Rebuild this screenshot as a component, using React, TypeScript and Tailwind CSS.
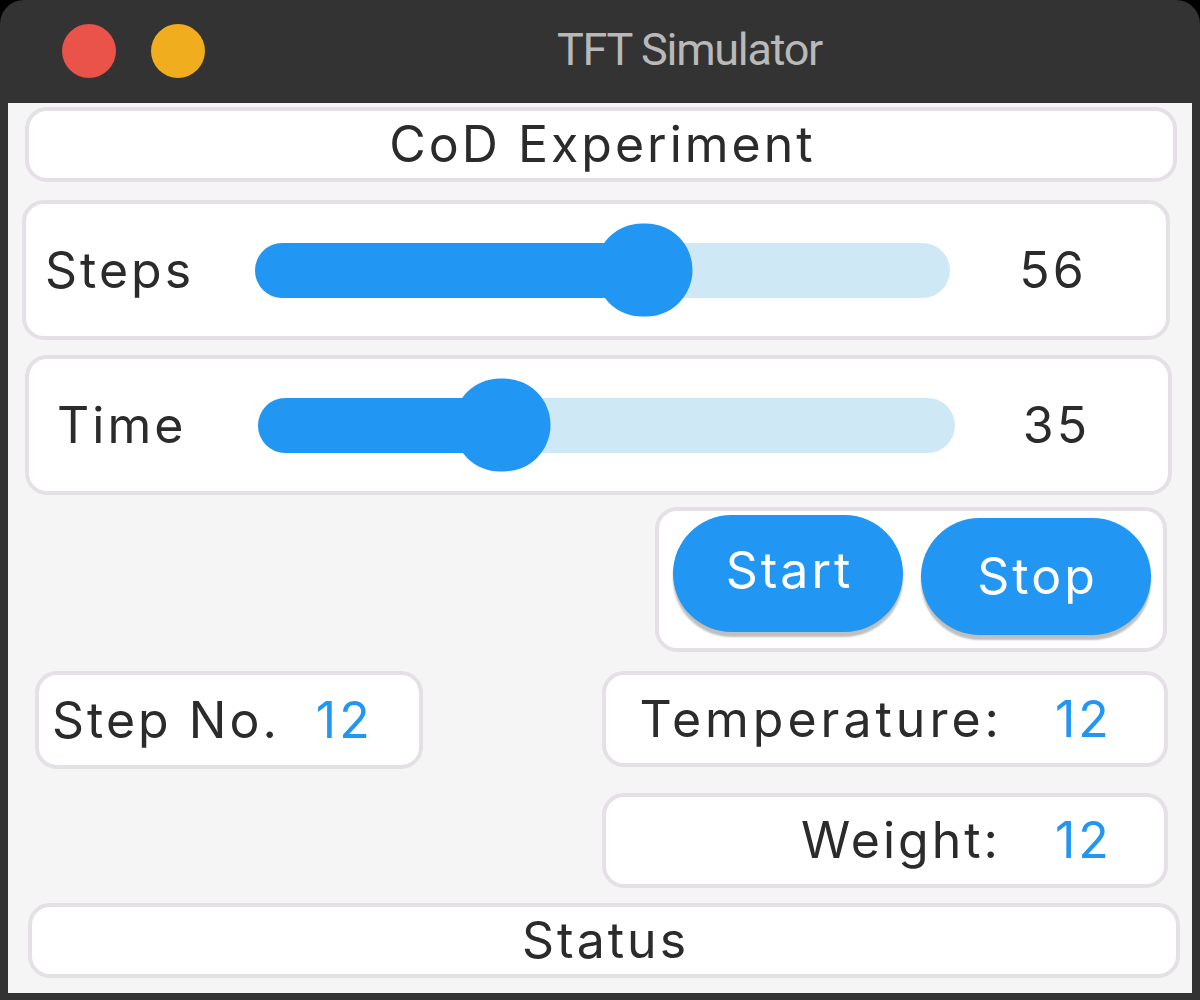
import React from "react";

const PANEL = "rounded-[22px] border-4 border-[#e4e0e6] bg-white";

function Slider({ value, width }: { value: number; width: number }) {
  return (
    <div className="relative h-[55px] rounded-full bg-[#cfe8f5]" style={{ width }}>
      <div
        className="absolute left-0 top-0 h-full rounded-full bg-[#2196f3]"
        style={{ width: `${value}%` }}
      />
      <div
        className="absolute top-1/2 h-[93px] w-[97px] -translate-x-1/2 -translate-y-1/2 rounded-full bg-[#2196f3]"
        style={{ left: `${value}%` }}
      />
    </div>
  );
}

export default function App() {
  return (
    <div className="h-[1000px] w-[1200px] overflow-hidden bg-black font-['Inter',sans-serif] text-[#2b2b2b]">
      <div className="flex h-full flex-col rounded-t-[24px] bg-[#333333] px-[8px] pb-[7px]">
        {/* title bar */}
        <div className="relative flex h-[103px] shrink-0 items-start pt-[24px]">
          <div className="ml-[54px] h-[54px] w-[54px] rounded-full bg-[#e9534a]" />
          <div className="ml-[35px] h-[54px] w-[54px] rounded-full bg-[#f0ad1e]" />
          <div className="absolute left-[549px] top-[22px] font-['Roboto',sans-serif] text-[45px] leading-[56px] tracking-[-1.3px] text-[#b9b9b9]">
            TFT Simulator
          </div>
        </div>

        <div className="flex flex-1 flex-col bg-[#f5f5f5] text-[50px] tracking-[3px]">
          {/* header */}
          <div className={`${PANEL} ml-[17px] mt-[4px] flex h-[75px] w-[1152px] items-center justify-center pl-[3px]`}>
            CoD Experiment
          </div>

          {/* steps */}
          <div className={`${PANEL} ml-[14px] mt-[18px] flex h-[140px] w-[1148px] items-center`}>
            <div className="w-[229px] pl-[19px]">Steps</div>
            <Slider value={56} width={695} />
            <div className="flex-1 pr-[10px] text-center">56</div>
          </div>

          {/* time */}
          <div className={`${PANEL} ml-[17px] mt-[15px] flex h-[140px] w-[1147px] items-center`}>
            <div className="w-[229px] pl-[28px]">Time</div>
            <Slider value={35} width={697} />
            <div className="flex-1 pr-[10px] text-center">35</div>
          </div>

          {/* buttons */}
          <div className={`${PANEL} ml-[647px] mt-[12px] flex h-[145px] w-[512px] items-start gap-[18px] pl-[14px] pt-[4px]`}>
            <button className="flex h-[117px] w-[230px] items-center justify-center rounded-full bg-[#2196f3] pb-[6px] pl-[3px] tracking-[3px] text-white shadow-[0_5px_2px_rgba(0,0,0,0.25)]">
              Start
            </button>
            <button className="mt-[3px] flex h-[117px] w-[230px] items-center justify-center rounded-full bg-[#2196f3] pl-[3px] tracking-[3px] text-white shadow-[0_5px_2px_rgba(0,0,0,0.25)]">
              Stop
            </button>
          </div>

          {/* readings */}
          <div className="mt-[19px] flex items-start">
            <div className={`${PANEL} ml-[27px] flex h-[98px] w-[388px] items-center pl-[13px]`}>
              <span>Step No.</span>
              <span className="ml-[36px] text-[#2196f3]">12</span>
            </div>
            <div className="ml-[179px] flex flex-col gap-[26px]">
              <div className={`${PANEL} flex h-[96px] w-[566px] items-center`}>
                <div className="-mr-[3px] flex-1 text-right tracking-[4px]">Temperature:</div>
                <div className="w-[164px] pl-[55px] text-[#2196f3]">12</div>
              </div>
              <div className={`${PANEL} flex h-[95px] w-[566px] items-center`}>
                <div className="-mr-[2px] flex-1 text-right">Weight:</div>
                <div className="w-[165px] pl-[56px] text-[#2196f3]">12</div>
              </div>
            </div>
          </div>

          {/* status */}
          <div className={`${PANEL} ml-[20px] mt-[15px] flex h-[75px] w-[1152px] items-center justify-center pl-[3px]`}>
            Status
          </div>
        </div>
      </div>
    </div>
  );
}
